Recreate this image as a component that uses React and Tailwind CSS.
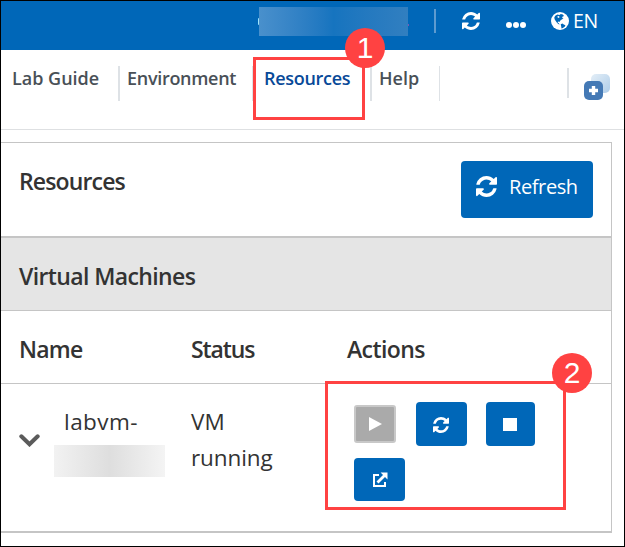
import React from "react";

function Marker({ children, className }) {
  return (
    <span
      className={`absolute z-10 flex size-[40px] items-center justify-center rounded-full bg-[#ff4242] font-['Liberation_Sans',sans-serif] text-[30px] leading-none tracking-normal text-white ${className}`}
    >
      {children}
    </span>
  );
}

function Refresh({ className }) {
  return (
    <svg viewBox="0 0 1536 1536" fill="currentColor" className={className}>
      <path d="M1511 928q0 5-1 7-64 268-268 434.5T764 1536q-146 0-282.5-55T238 1324l-129 129q-19 19-45 19t-45-19-19-45V960q0-26 19-45t45-19h448q26 0 45 19t19 45-19 45l-137 137q71 66 161 102t187 36q134 0 250-65t186-179q11-17 53-117 8-23 30-23h192q13 0 22.5 9.5t9.5 22.5zm25-800v448q0 26-19 45t-45 19h-448q-26 0-45-19t-19-45 19-45l138-138Q969 256 768 256q-134 0-250 65T332 500q-11 17-53 117-8 23-30 23H50q-13 0-22.5-9.5T18 608v-7q65-268 270-434.5T768 0q146 0 284 55.5T1297 212l130-129q19-19 45-19t45 19 19 45z" />
    </svg>
  );
}

function Globe({ className }) {
  return (
    <svg viewBox="0 0 18 18" className={className}>
      <circle cx="9" cy="9" r="9" fill="white" />
      <path d="M4.2 3.8L6.4 2.6l2 .5 1.4-1 2 .4 1.2 1.6-1.6.6-.2 1.2 1.3.6-1.8 1-1.6 1.3-.6 1.3-1.4-.6-.5 1 1.2.8.9 1.1-1.5-.3-1.6-1.8-1.2-1.8L3.6 7.2l-.3-1.8z" fill="#0067b8" />
      <path d="M9.7 12.3l1.7-.7 1.4.8 1.6.8-.5 1.2-2 1.6-1.4.5-.3-2z" fill="#0067b8" />
      <path d="M6.2 4.4l1.8-.5.6 1.3-1.5.8z" fill="white" />
    </svg>
  );
}

function ExternalLink() {
  return (
    <svg viewBox="0 0 16 16" className="size-4" fill="none" stroke="white" strokeWidth="2">
      <path d="M7 3H2v11h11V10" />
      <path d="M5.5 10.5L13 3" strokeWidth="2.8" />
      <path d="M8.6 .5h6.9v6.9z" fill="white" stroke="none" />
    </svg>
  );
}

function AddWindow() {
  return (
    <svg viewBox="0 0 26 26" className="size-[26px]">
      <defs>
        <linearGradient id="pane" x1="0" y1="0" x2="1" y2="1">
          <stop offset="0" stopColor="#e3eef7" />
          <stop offset="1" stopColor="#afcde9" />
        </linearGradient>
      </defs>
      <rect x="7" y="0" width="19" height="19" rx="5" fill="url(#pane)" />
      <rect x="0" y="7" width="19" height="19" rx="5" fill="#4479b5" />
      <path d="M9.5 12v9M5 16.5h9" stroke="white" strokeWidth="3.4" />
    </svg>
  );
}

export default function App() {
  return (
    <div className="relative h-[547px] w-[625px] overflow-hidden border border-black bg-white font-['Open_Sans','Noto_Sans',sans-serif] text-[#333]">
      <header className="flex h-[49px] items-start bg-[#0067b8] pl-[257px] text-white">
        <span className="mt-[17px] h-[7px] w-px rounded-l-full bg-[#9fe4fb]" />
        <span className="mt-[6px] h-[29px] w-[149px] bg-linear-to-r from-[#4990cc] via-[#1674bf] to-[#317fc0]" />
        <span className="mt-[23px] h-[2px] w-px bg-[#7b59b4]" />
        <span className="mt-[8px] ml-[25px] h-[24px] w-[2px] bg-[#5d9bd0]" />
        <Refresh className="mt-[11px] ml-[26px] size-[18px]" />
        <span className="mt-[21px] ml-[26px] flex gap-px">
          <i className="size-[6px] rounded-full bg-white" />
          <i className="size-[6px] rounded-full bg-white" />
          <i className="size-[6px] rounded-full bg-white" />
        </span>
        <Globe className="mt-[11px] ml-[25px] size-[18px]" />
        <span className="mt-[6px] ml-[4px] text-[19.5px] leading-[28px] tracking-[-0.4px]">EN</span>
      </header>

      <nav className="relative flex h-[80px] items-start border-b border-[#dee0e2] text-[18px] leading-[26px] font-semibold tracking-[-0.3px] whitespace-nowrap text-[#495057]">
        <a className="mt-[15px] w-[117px] pl-[11px]">
          <span className="tracking-[0px]">Lab Guide</span>
        </a>
        <span className="mt-[16px] h-[35px] w-[2px] bg-[#dee2e6]" />
        <a className="mt-[15px] w-[132px] pl-[7px]">Environment</a>
        <span className="mt-[16px] h-[35px] w-[3px] bg-[#dee2e6]" />
        <a className="mt-[15px] w-[115px] pl-[9px] text-[#084998]">Resources</a>
        <span className="mt-[16px] h-[35px] w-[2px] bg-[#dee2e6]" />
        <a className="mt-[15px] w-[67px] pl-[7px] tracking-[0px]">Help</a>
        <span className="mt-[16px] h-[35px] w-px bg-[#dee2e6]" />
        <span className="mt-[18px] ml-[127px] h-[30px] w-[2px] bg-[#dee2e6]" />
        <span className="mt-[24px] ml-[15px]"><AddWindow /></span>
        <span className="absolute top-[7px] left-[252px] h-[63px] w-[112px] border-[3px] border-[#ff4242]" />
        <Marker className="-top-[22px] left-[344px] font-normal">1</Marker>
      </nav>

      <main className="mt-[12px] h-[391px] w-[611px] border-t border-r border-b-2 border-[#c5c5c5]">
        <div className="flex h-[95px] items-start justify-between border-b-2 border-[#c5c5c5] pt-[18px] pr-[18px] pl-[18px]">
          <h1 className="mt-[4px] text-[23px] leading-[32px] font-semibold tracking-[-0.85px]">Resources</h1>
          <button className="flex h-[57px] w-[132px] items-start rounded-[4px] bg-[#0067b8] pt-[15px] pl-[15px] text-white">
            <Refresh className="size-[21px]" />
            <span className="-mt-[3px] ml-[12px] text-[20px] leading-[28px] tracking-[-0.4px]">Refresh</span>
          </button>
        </div>
        <div className="h-[73px] border-b border-[#c5c5c5] bg-[#e5e5e5] pt-[22px] pl-[18px]">
          <h2 className="text-[23px] leading-[32px] font-semibold tracking-[-0.62px]">Virtual Machines</h2>
        </div>
        <div className="grid h-[73px] grid-cols-[172px_156px_1fr] border-b border-[#c5c5c5] pt-[22px] pl-[18px] text-[23px] leading-[32px] font-semibold tracking-[-0.8px]">
          <span>Name</span>
          <span className="tracking-[-1.1px]">Status</span>
          <span className="tracking-[-0.6px]">Actions</span>
        </div>
        <div className="grid grid-cols-[45px_127px_134px_1fr] pl-[18px] text-[22.5px] leading-[36px]">
          <svg viewBox="0 0 21 13" className="mt-[50px] h-[13px] w-[21px]" fill="none" stroke="#5b5b5b" strokeWidth="4" strokeLinecap="round" strokeLinejoin="miter">
            <path d="M2.3 2.3l8.2 8 8.2-8" />
          </svg>
          <div className="pt-[20px]">
            <div className="tracking-[0.45px]">labvm-</div>
            <div className="mt-[5px] -ml-[10px] h-[32px] w-[111px] bg-linear-to-r from-[#f2f2f2] via-[#dedede] to-[#f4f4f4]" />
          </div>
          <div className="pt-[20px]">
            <div>VM</div>
            <div className="tracking-[-0.1px]">running</div>
          </div>
          <div className="relative h-[129px] w-[241px] pt-[18px] pl-[29px]">
            <div className="flex items-start">
              <button className="mt-[3px] flex h-[38px] w-[42px] items-center justify-center rounded-[3px] border-2 border-[#c8c8c8] bg-[#aaa]">
                <svg viewBox="0 0 13 14" className="h-[14px] w-[13px]" fill="white"><path d="M0 0l13 7-13 7z" /></svg>
              </button>
              <button className="ml-[20px] flex h-[44px] w-[51px] items-center justify-center rounded-[4px] bg-[#0067b8] text-white">
                <Refresh className="mt-px mr-px size-[16px]" />
              </button>
              <button className="ml-[19px] flex h-[44px] w-[49px] items-center justify-center rounded-[4px] bg-[#0067b8]">
                <span className="mt-[1px] mr-[1px] h-[13px] w-[14px] bg-white" />
              </button>
            </div>
            <button className="mt-[12px] flex h-[43px] w-[51px] items-center justify-center rounded-[4px] bg-[#0067b8]">
              <ExternalLink />
            </button>
            <span className="pointer-events-none absolute -top-[3px] left-0 h-[129px] w-[241px] border-[3px] border-[#ff4242]" />
            <Marker className="-top-[31px] left-[227px]">2</Marker>
          </div>
        </div>
      </main>
    </div>
  );
}
